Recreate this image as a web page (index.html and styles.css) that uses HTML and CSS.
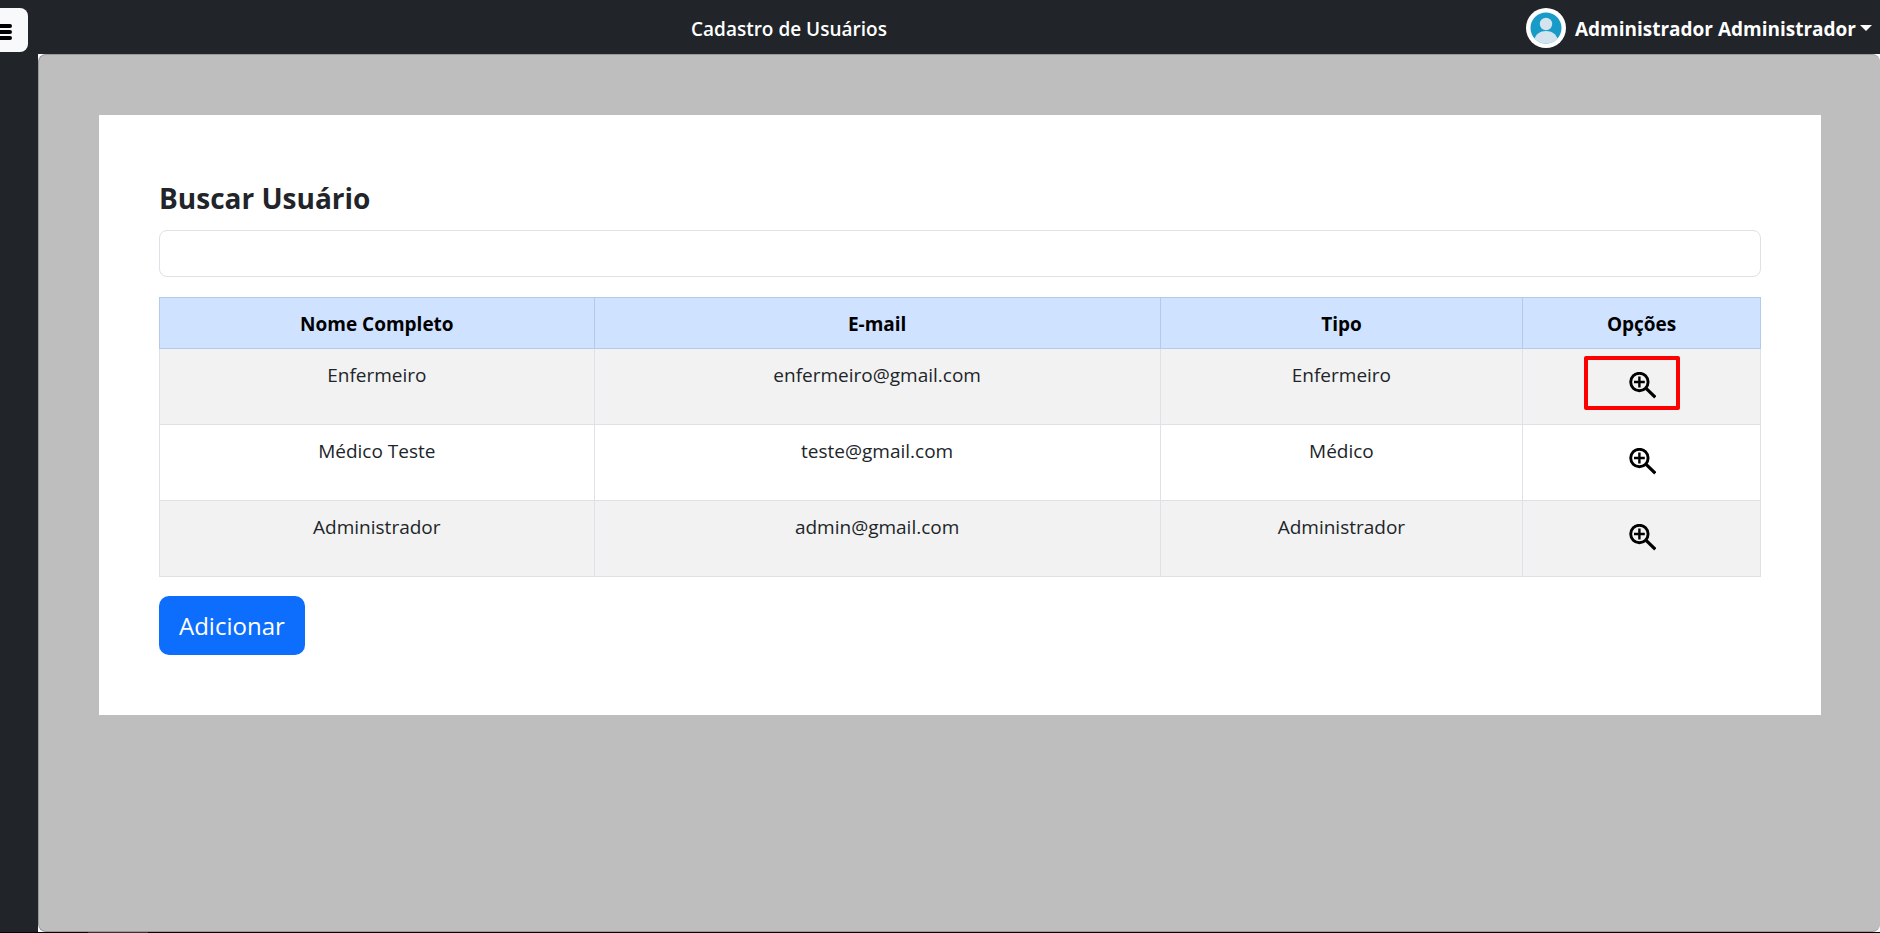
FILE: index.html
```html
<!DOCTYPE html>
<html lang="pt-BR">
<head>
<meta charset="utf-8">
<title>Cadastro de Usuários</title>
<link rel="stylesheet" href="styles.css">
</head>
<body>
<header class="topbar">
  <div class="topbar-start">
    <button class="menu-toggle" type="button" aria-label="Menu">
      <svg width="20" height="16" viewBox="0 0 20 16" stroke="#000" stroke-width="4" stroke-linecap="round"><path d="M2 2H18M2 8H18M2 14H18"/></svg>
    </button>
  </div>
  <h1 class="topbar-title">Cadastro de Usuários</h1>
  <button class="user-menu" type="button">
    <svg class="avatar" viewBox="0 0 40 40" aria-hidden="true">
      <defs><clipPath id="disc"><circle cx="20" cy="20" r="15.5"/></clipPath></defs>
      <circle cx="20" cy="20" r="20" fill="#fff"/>
      <g clip-path="url(#disc)">
        <rect width="40" height="40" fill="#199bc8"/>
        <circle cx="20" cy="16" r="6.2" fill="#d4e4ef"/>
        <path d="M8.5 36V31C10 26 14 23 20 23S30 26 31.500 31V36Z" fill="#d4e4ef"/>
      </g>
    </svg>
    <span class="user-name">Administrador Administrador</span>
    <span class="caret"></span>
  </button>
</header>
<div class="shell">
  <nav class="sidebar" aria-label="Principal"></nav>
  <div class="stage">
    <main class="content">
      <section class="card">
        <label class="search-label" for="busca">Buscar Usuário</label>
        <input class="search-input" id="busca" type="text">
        <table class="users">
          <colgroup><col class="col-name"><col class="col-mail"><col class="col-type"><col class="col-opts"></colgroup>
          <thead>
            <tr><th scope="col">Nome Completo</th><th scope="col">E-mail</th><th scope="col">Tipo</th><th scope="col">Opções</th></tr>
          </thead>
          <tbody>
            <tr>
              <td>Enfermeiro</td><td>enfermeiro@gmail.com</td><td>Enfermeiro</td>
              <td class="options"><button class="view" type="button" aria-label="Ver Enfermeiro"><svg class="lens" viewBox="0 0 27 27"><use href="#lens"/></svg></button><span class="highlight"></span></td>
            </tr>
            <tr>
              <td>Médico Teste</td><td>teste@gmail.com</td><td>Médico</td>
              <td class="options"><button class="view" type="button" aria-label="Ver Médico Teste"><svg class="lens" viewBox="0 0 27 27"><use href="#lens"/></svg></button></td>
            </tr>
            <tr>
              <td>Administrador</td><td>admin@gmail.com</td><td>Administrador</td>
              <td class="options"><button class="view" type="button" aria-label="Ver Administrador"><svg class="lens" viewBox="0 0 27 27"><use href="#lens"/></svg></button></td>
            </tr>
          </tbody>
        </table>
        <button class="add" type="button">Adicionar</button>
      </section>
    </main>
  </div>
</div>
<footer class="bottom-edge"><div class="bottom-mark"></div></footer>
<svg class="symbols" aria-hidden="true">
  <symbol id="lens" viewBox="0 0 27 27">
    <g fill="none" stroke="#000">
      <circle cx="10.400" cy="10" r="8.700" stroke-width="2.900"/>
      <path d="M10.400 4.600V15.400M5 10H15.800" stroke-width="2.400"/>
      <path d="M16.600 15.800L26.300 25.300" stroke-width="3.200"/>
    </g>
  </symbol>
</svg>
</body>
</html>
```
FILE: styles.css
```css
* { box-sizing: border-box; }

body {
  margin: 0;
  min-height: 100vh;
  display: flex;
  flex-direction: column;
  background: #fff;
  color: #212529;
  font-family: "Open Sans", "Noto Sans", sans-serif;
  font-size: 19px;
  line-height: 30px;
}

button {
  font: inherit;
  color: inherit;
  border: 0;
  background: none;
  cursor: pointer;
}

.topbar {
  display: flex;
  align-items: center;
  justify-content: space-between;
  height: 54px;
  padding-right: 8px;
  background: #212529;
  color: #fff;
}

.topbar-start { width: 52px; padding-top: 6px; }

.menu-toggle {
  display: flex;
  align-items: center;
  justify-content: flex-end;
  width: 28px;
  height: 44px;
  padding: 4px 16px 0 0;
  border-radius: 0 8px 8px 0;
  background: #f8f9fa;
  overflow: hidden;
}

.menu-toggle svg { flex: none; }

.topbar-title {
  margin: 0;
  padding-top: 4px;
  font-size: 19px;
  font-weight: 600;
}

.user-menu {
  display: flex;
  align-items: center;
  padding: 2px 0 0;
  font-weight: 700;
}

.avatar { width: 40px; height: 40px; margin-right: 9px; }

.user-name { padding-top: 2px; }

.caret {
  margin-left: 4px;
  border: 6px solid transparent;
  border-top-color: #fff;
  border-bottom: 0;
}

.shell { flex: 1; display: flex; }

.sidebar { width: 38px; background: #212529; }

.stage { flex: 1; display: flex; }

.content {
  flex: 1;
  padding: 60px 59px 60px 60px;
  border: 1px solid #999;
  border-right: 0;
  border-radius: 8px;
  background: #bebebe;
}

.card {
  padding: 60px;
  background: #fff;
}

.search-label {
  display: block;
  padding: 3px 0 12px;
  font-size: 28px;
  font-weight: 700;
  line-height: 40px;
}

.search-input {
  display: block;
  width: 100%;
  height: 47px;
  margin-bottom: 20px;
  padding: 8px 15px;
  border: 1px solid #dee2e6;
  border-radius: 8px;
  font: inherit;
}

.users {
  width: 100%;
  margin-bottom: 19px;
  border-collapse: collapse;
  table-layout: fixed;
  text-align: center;
}

.col-name { width: 27.15%; }
.col-mail { width: 35.35%; }
.col-type { width: 22.65%; }

.users th {
  padding: 11px 10px 9px;
  border: 1px solid #b5c9ea;
  background: #cfe2ff;
  color: #000;
  font-weight: 700;
}

.users td {
  padding: 11px 10px 9px;
  border: 1px solid #dee2e6;
  vertical-align: top;
}

.users tbody tr:nth-child(odd) { background: #f2f2f2; }

.users .options { position: relative; padding: 9px 10px 11px 12px; }

.view { display: block; margin: 0 auto; padding: 14px; }

.lens { display: block; width: 27px; height: 27px; }

.highlight {
  position: absolute;
  top: 7px;
  left: 61px;
  width: 96px;
  height: 54px;
  border: 4px solid #f00;
  border-radius: 2px;
  pointer-events: none;
}

.add {
  display: block;
  padding: 15px 20px 14px;
  border-radius: 10px;
  background: #0d6efd;
  color: #fff;
  font-size: 24px;
}

.bottom-edge { height: 1px; padding-left: 88px; background: #000; }

.bottom-mark { width: 60px; height: 1px; background: #333; }

.symbols { display: none; }
```
